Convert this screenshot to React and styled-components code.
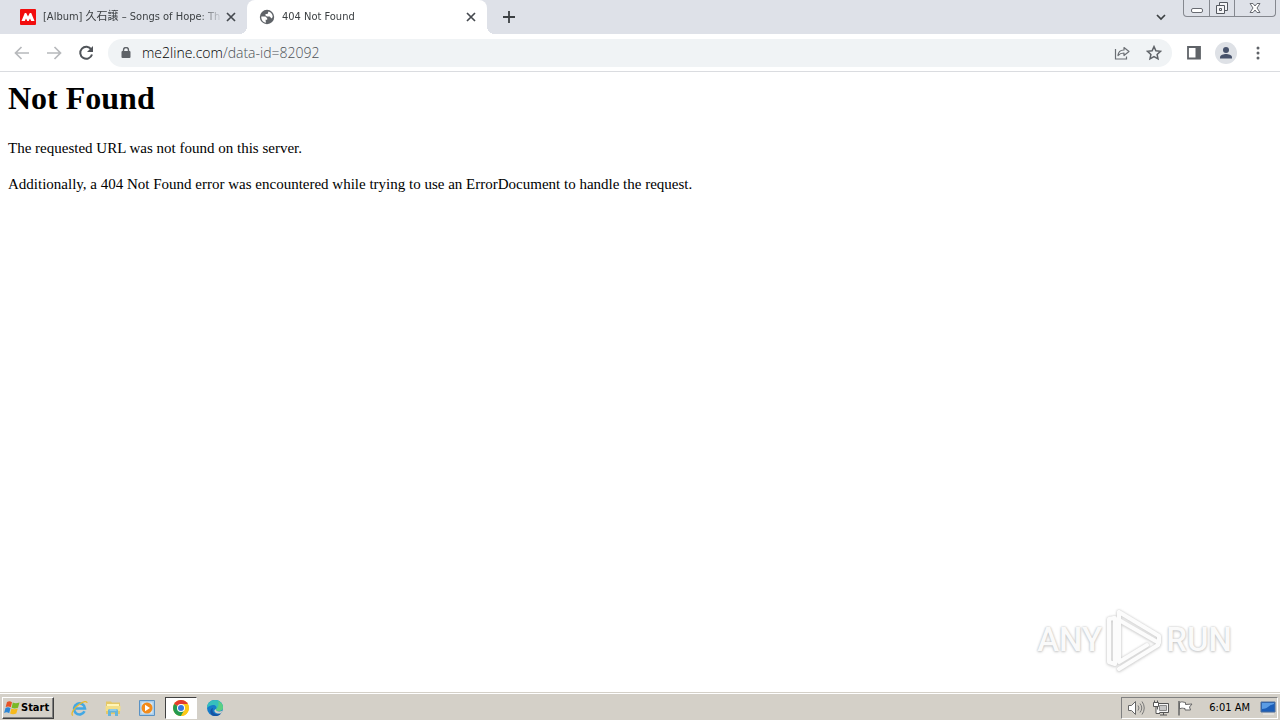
import React from "react";
import styled, { createGlobalStyle } from "styled-components";

const GlobalStyle = createGlobalStyle`
  * { box-sizing: border-box; }
  body { margin: 0; background: #fff; }
  button, input { font: inherit; color: inherit; }
  svg { display: block; flex: none; }
`;

const ui = `"DejaVu Sans Condensed", "Noto Sans", "Noto Sans CJK TC", sans-serif`;

const Screen = styled.div`
  min-height: 100vh;
  display: flex;
  flex-direction: column;
`;

const TabStrip = styled.header`
  display: flex;
  height: 34px;
  background: #dee1e8;
  font-family: ${ui};
  font-size: 11px;
  color: #3c4043;
`;

const Tab = styled.div`
  position: relative;
  display: flex;
  align-items: center;
  width: ${(p) => (p.$active ? 240 : 247)}px;
  padding: 0 8px 0 ${(p) => (p.$active ? 12 : 20)}px;
  border-radius: 8px 8px 0 0;
  background: ${(p) => (p.$active ? "#fff" : "transparent")};

  &::before, &::after {
    content: "";
    display: ${(p) => (p.$active ? "block" : "none")};
    position: absolute;
    bottom: 0;
    width: 8px;
    height: 8px;
  }
  &::before {
    right: 100%;
    background: radial-gradient(circle at 0 0, transparent 8px, #fff 8px);
  }
  &::after {
    left: 100%;
    background: radial-gradient(circle at 100% 0, transparent 8px, #fff 8px);
  }
`;

const TabTitle = styled.span`
  flex: 1;
  min-width: 0;
  margin-left: 7px;
  line-height: 18px;
  white-space: nowrap;
  mask-image: linear-gradient(to right, #000 calc(100% - 24px), transparent);
`;

const IconButton = styled.button`
  display: flex;
  align-items: center;
  justify-content: center;
  flex: none;
  width: ${(p) => p.$width || p.$size || 32}px;
  height: ${(p) => p.$size || 32}px;
  padding: 0;
  border: 0;
  border-radius: 50%;
  background: transparent;
`;

const StripEnd = styled.div`
  display: flex;
  margin-left: auto;
  padding-right: 4px;
`;

const WindowControls = styled.div`
  display: flex;
  height: 17px;
  margin-left: 5px;
  border: 1px solid #85888f;
  border-top: 0;
  border-radius: 0 0 4px 4px;
`;

const WindowButton = styled.button`
  display: flex;
  align-items: center;
  justify-content: center;
  width: ${(p) => p.$width}px;
  padding: 0;
  border: 0;
  background: transparent;
  & + & { border-left: 1px solid #85888f; }
`;

const Toolbar = styled.nav`
  display: flex;
  align-items: center;
  height: 38px;
  padding: 0 6px;
  border-bottom: 1px solid #dadce0;
  background: #fff;
`;

const AddressBar = styled.div`
  display: flex;
  align-items: center;
  flex: 1;
  height: 28px;
  margin: 0 6px;
  padding: 0 2px 0 12px;
  border-radius: 14px;
  background: #f0f3f5;
`;

const Address = styled.a`
  flex: 1;
  margin-left: 10px;
  font: 14px/20px "Open Sans", "Noto Sans", sans-serif;
  font-weight: 300;
  color: #4d5156;
  text-decoration: none;
`;

const Host = styled.span`
  color: #000;
`;

const Page = styled.main`
  flex: 1;
  display: flex;
  flex-direction: column;
  padding: 8px;
  font-family: "Liberation Serif", serif;
  color: #000;
`;

const Heading = styled.h1`
  margin: 0 0 22px;
  font-size: 32px;
  line-height: 36px;
`;

const Message = styled.p`
  margin: 0 0 16px;
  font-size: 15px;
  line-height: 20px;
`;

const Watermark = styled.div`
  display: flex;
  align-items: center;
  align-self: flex-end;
  margin: auto 40px 12px 0;
  color: #fafafa;
  font: 500 33px/64px Roboto, "Liberation Sans", sans-serif;
  text-shadow: 0 0 2px #bbb, 0 1px 3px #ccc;
  svg { margin: 0 4px; filter: drop-shadow(0 0 1px #ccc) drop-shadow(0 1px 1px #ddd); }
`;

const Taskbar = styled.footer`
  display: flex;
  align-items: center;
  height: 28px;
  padding: 2px 2px 0;
  border-top: 1px solid #d4d0c8;
  background: #d4d0c8;
  box-shadow: inset 0 1px #fff;
  font-family: ${ui};
  font-size: 11px;
  color: #000;
`;

const StartButton = styled.button`
  display: flex;
  align-items: center;
  gap: 1px;
  width: 52px;
  height: 22px;
  margin-right: 8px;
  padding: 0 1px;
  border: 1px solid;
  border-color: #fff #404040 #404040 #fff;
  background: #d4d0c8;
  box-shadow: inset -1px -1px #808080;
  font-weight: bold;
  white-space: nowrap;
`;

const TaskButton = styled.button`
  display: flex;
  align-items: center;
  justify-content: center;
  width: ${(p) => (p.$active ? 32 : 34)}px;
  height: 22px;
  margin: 0 ${(p) => (p.$active ? 1 : 0)}px;
  padding: 0;
  border: ${(p) => (p.$active ? "1px solid" : "0")};
  border-color: #404040 #fff #fff #404040;
  background: ${(p) => (p.$active ? "#fff" : "transparent")};
`;

const Tray = styled.div`
  display: flex;
  align-items: center;
  gap: 8px;
  height: 22px;
  margin-left: auto;
  padding: 0 1px 0 5px;
  border: 1px solid;
  border-color: #808080 #fff #fff #808080;
`;

const Clock = styled.time`
  margin: 0 2px 0 8px;
  white-space: nowrap;
`;

const Icon = ({ size = 16, view = 24, children, ...rest }) => (
  <svg width={size} height={size} viewBox={`0 0 ${view} ${view}`} fill="none" aria-hidden="true" {...rest}>
    {children}
  </svg>
);

const CloseIcon = () => (
  <Icon size={10} view={10}><path d="M1 1l8 8M9 1l-8 8" stroke="#45494f" strokeWidth="1.7" /></Icon>
);

const SiteIcon = () => (
  <Icon view={16}>
    <rect width="16" height="16" rx="1" fill="#f20d0d" />
    <path d="M1.500 12L4.800 4h1.400L8 7.500 9.800 4h1.400l3.300 8h-3.300L10 9.500 8.700 12H7.300L6 9.500 4.800 12z" fill="#fff" />
  </Icon>
);

const GlobeIcon = () => (
  <Icon view={16}>
    <circle cx="8" cy="8" r="7.200" fill="#5f6368" />
    <path d="M2.300 7.500l4.200.1 1.700 1.700v1.500H6.600l.3 2.900C4 13.300 2 10.800 2.300 7.500zM9.500 2.500c2.500.7 4.200 2.800 4.200 5.500l-1.200 1.500-1.800-1.900H8L6.500 6.400V5h2z" fill="#fff" />
  </Icon>
);

const ArrowIcon = ({ flip }) => (
  <Icon view={16}>
    <path d={flip ? "M1 8h13M8.500 2l6 6-6 6" : "M15 8H2M7.500 2l-6 6 6 6"} stroke="#b7b9bc" strokeWidth="1.700" />
  </Icon>
);

const ReloadIcon = () => (
  <Icon view={16}>
    <path d="M13.300 4.500A6 6 0 1 0 14 9.500" stroke="#505459" strokeWidth="2" />
    <path d="M15 1v6H9z" fill="#505459" />
  </Icon>
);

const LockIcon = () => (
  <Icon size={12} view={12}>
    <rect x="1.500" y="4" width="9" height="7" rx="1" fill="#5f6368" />
    <path d="M3.500 5V3a2.500 2.500 0 0 1 5 0v2" stroke="#5f6368" strokeWidth="1.400" />
  </Icon>
);

const ShareIcon = () => (
  <Icon view={16}>
    <path d="M1.500 4v10h11v-2.500" stroke="#6b6f74" strokeWidth="1.200" />
    <path d="M4 10.500c.3-4 2.500-5.500 6-5.500V2.500L15 6.500l-5 4V8C7.300 8 5.500 8.700 4 10.500z" stroke="#6b6f74" strokeWidth="1.200" strokeLinejoin="round" />
  </Icon>
);

const StarIcon = () => (
  <Icon view={16}>
    <path d="M8 1.600l1.900 4.200 4.600.5-3.400 3.100.9 4.500-4-2.300-4 2.300.9-4.500-3.400-3.100 4.600-.5z" stroke="#5f6368" strokeWidth="1.500" />
  </Icon>
);

const PanelIcon = () => (
  <Icon view={16}>
    <path d="M2 2h12v11.500H2z" stroke="#5f6368" strokeWidth="1.800" />
    <path d="M9.500 2H14v11.500H9.500z" fill="#5f6368" />
  </Icon>
);

const ProfileIcon = () => (
  <Icon size={22} view={22}>
    <circle cx="11" cy="11" r="11" fill="#dee1e6" />
    <circle cx="11" cy="8" r="3" fill="#47526b" />
    <path d="M5 16.500v-1.300C5 13 8.700 12 11 12s6 1 6 3.200v1.300z" fill="#47526b" />
  </Icon>
);

const MenuIcon = () => (
  <Icon view={16}>
    <g fill="#5f6368"><circle cx="8" cy="3" r="1.500" /><circle cx="8" cy="8" r="1.500" /><circle cx="8" cy="13" r="1.500" /></g>
  </Icon>
);

const WindowsFlag = () => (
  <Icon view={16}>
    <path d="M3 2c2-1.200 3.500-.8 5 .2L6.800 7.300C5.300 6.300 3.600 6 1.700 7z" fill="#e65327" />
    <path d="M8.800 2.600c2 1 3.700 1 6.700 0L14 7.800c-2.500 1-4.600.9-6.400-.1z" fill="#79b927" />
    <path d="M1.500 8c2-1.100 3.600-.8 5 .2l-1.300 5C3.700 12.200 2 12 .1 13z" fill="#2c86d6" />
    <path d="M7.400 8.600c2 1 3.900 1 6.400 0l-1.500 5c-2.300 1-4.400 1-6.200 0z" fill="#f6b91b" />
  </Icon>
);

const ExplorerIcon = () => (
  <Icon size={18} view={18}>
    <path d="M14.500 12.300A5.500 5.500 0 1 1 15 9.500H5.500" stroke="#43a8e4" strokeWidth="2.600" />
    <path d="M3 16.500c-3-1.200 1-7.500 6-11 4-2.900 8-4 8-1.500" stroke="#e9b92d" strokeWidth="1.300" />
  </Icon>
);

const FolderIcon = () => (
  <Icon size={18} view={18}>
    <path d="M2 2.500h5l1 1h8V15H2z" fill="#e5c867" />
    <path d="M3 5h12v5H3z" fill="#fff5b8" />
    <path d="M1.500 7h15v5h-15z" fill="#f3df88" />
    <path d="M4 17v-5.500q0-1.500 1.500-1.500h7q1.500 0 1.500 1.500V17h-3v-3.500H7V17z" fill="#65b5dc" />
    <path d="M5.500 11h7" stroke="#b9e2f3" />
  </Icon>
);

const MediaIcon = () => (
  <Icon size={18} view={18}>
    <path d="M1.500 1.500h15v15h-15z" fill="#a9cdea" stroke="#5a92c4" />
    <path d="M3.500 3.500h11v11h-11z" fill="#d9e9f4" />
    <circle cx="9" cy="9" r="5.500" fill="#f28b1b" />
    <path d="M7 5.800L12 9l-5 3.200z" fill="#fff" />
  </Icon>
);

const ChromeIcon = () => (
  <Icon size={16} view={16}>
    <circle cx="8" cy="8" r="8" fill="#fbc816" />
    <path d="M8 8L1.100 4A8 8 0 0 1 14.900 4z" fill="#e33b2e" />
    <path d="M8 8L1.100 4A8 8 0 0 0 8 16l3.500-6z" fill="#249a50" />
    <path d="M8 4h6.900A8 8 0 0 1 8 16l3.500-6z" fill="#fbc816" />
    <circle cx="8" cy="8" r="4" fill="#fff" />
    <circle cx="8" cy="8" r="3" fill="#3878df" />
  </Icon>
);

const EdgeIcon = () => (
  <Icon size={18} view={18}>
    <circle cx="9" cy="9" r="8" fill="#167bc9" />
    <path d="M1 9C1 4 4.500 1 9 1c5 0 8 3.500 8 7 0 3-2 4-4.500 4-2 0-3-.8-2.400-1.700C12 7 7 3.500 1 9z" fill="#36bfbd" />
    <path d="M12 2c4 2 5 4 5 6.500 0 2.700-2 3.500-4.500 3.500-2 0-3-.8-2.400-1.700C13 7 13 4 12 2z" fill="#5bcf83" />
    <path d="M7 9c-2 4 2 8 8 5.500C13 17 9.500 17.500 7 16.700 3.500 15 3.500 10 7 9z" fill="#1653a3" />
    <path d="M10 10c-1 2 3 3.500 6.500 1.700l-1.500 2.500c-4 .9-7-.7-6.500-3.200z" fill="#d4d0c8" />
  </Icon>
);

const SpeakerIcon = () => (
  <Icon size={18} view={18}>
    <path d="M1.500 6.500h3l4-4v13l-4-4h-3z" fill="#fff" stroke="#666" />
    <path d="M11 6.500q2 2.500 0 5M13 4.500q3.500 4.500 0 9M15 2.500q4.500 6.500 0 13" stroke="#777" />
  </Icon>
);

const NetworkIcon = () => (
  <Icon view={16}>
    <path d="M4.500 3.500h11v9h-11zM7 15h7M10.500 13v2" fill="#f5f5f5" stroke="#555" />
    <path d="M6.500 5.500h7v5h-7z" fill="#c6c6c6" stroke="#888" />
    <path d="M.5 2.500h5v4h-5zM1.500.5v2M4.500.5v2M3 7v6.500h4" fill="#fff" stroke="#555" />
  </Icon>
);

const FlagIcon = () => (
  <Icon view={16}>
    <path d="M2 1v14.500" stroke="#666" strokeWidth="1.500" />
    <path d="M2.500 2.500c3-1.500 4 0 6 0v2l6.500-.5-2.500 3 1 3H8V8.500c-2 0-3-1-5.500.5z" fill="#fff" stroke="#666" />
  </Icon>
);

const DesktopIcon = () => (
  <Icon view={16}>
    <path d="M1 2h14v10H1z" fill="#1c5eb8" stroke="#4c6f9d" />
    <path d="M2 3h12v1C9 5 8 9 2 9z" fill="#5b9ce4" />
    <path d="M3 14h11" stroke="#eee" />
  </Icon>
);

const PlayLogo = () => (
  <svg width="56" height="64" viewBox="0 0 56 64" fill="none" aria-hidden="true">
    <g stroke="#fcfcfc" strokeWidth="4" strokeLinejoin="round" strokeLinecap="round">
      <path d="M8 10l-5 1v43l6 2V10" />
      <path d="M13 4v50M13 4l40 24v7L13 12M13 61l39-24M13 54l28-17" />
    </g>
  </svg>
);

export default function App() {
  return (
    <Screen>
      <GlobalStyle />
      <TabStrip>
        <Tab>
          <SiteIcon />
          <TabTitle>[Album] 久石譲 – Songs of Hope: Th</TabTitle>
          <IconButton $size={16} aria-label="Close tab"><CloseIcon /></IconButton>
        </Tab>
        <Tab $active>
          <GlobeIcon />
          <TabTitle>404 Not Found</TabTitle>
          <IconButton $size={16} aria-label="Close tab"><CloseIcon /></IconButton>
        </Tab>
        <IconButton $size={34} $width={44} aria-label="New tab">
          <Icon size={12} view={12}><path d="M6 0v12M0 6h12" stroke="#3c4043" strokeWidth="1.800" /></Icon>
        </IconButton>
        <StripEnd>
          <IconButton $size={34} aria-label="Search tabs">
            <Icon size={10} view={10}><path d="M1 3l4 4 4-4" stroke="#3c4043" strokeWidth="1.700" /></Icon>
          </IconButton>
          <WindowControls>
            <WindowButton $width={25} aria-label="Minimize">
              <Icon size={14} view={14}><rect x="1.500" y="7.500" width="11" height="4" rx="1.500" fill="#fff" stroke="#686b72" /></Icon>
            </WindowButton>
            <WindowButton $width={25} aria-label="Restore">
              <Icon size={14} view={14}>
                <path d="M4.500 1.500h8v8h-8z" fill="#f5f5f7" stroke="#555960" />
                <path d="M1.500 4.500h8v8h-8zM4.500 7.500h2v2h-2z" fill="#f5f5f7" stroke="#555960" />
              </Icon>
            </WindowButton>
            <WindowButton $width={41} aria-label="Close">
              <Icon size={12} view={12}>
                <path d="M1 1.500h3l2 2.500 2-2.500h3L8 6l3 4.500H8L6 8l-2 2.500H1L4 6z" fill="#fff" stroke="#686b72" />
              </Icon>
            </WindowButton>
          </WindowControls>
        </StripEnd>
      </TabStrip>
      <Toolbar>
        <IconButton aria-label="Back"><ArrowIcon /></IconButton>
        <IconButton aria-label="Forward"><ArrowIcon flip /></IconButton>
        <IconButton aria-label="Reload"><ReloadIcon /></IconButton>
        <AddressBar>
          <LockIcon />
          <Address href="#"><Host>me2line.com</Host>/data-id=82092</Address>
          <IconButton aria-label="Share"><ShareIcon /></IconButton>
          <IconButton aria-label="Bookmark"><StarIcon /></IconButton>
        </AddressBar>
        <IconButton aria-label="Side panel"><PanelIcon /></IconButton>
        <IconButton aria-label="Profile"><ProfileIcon /></IconButton>
        <IconButton aria-label="Menu"><MenuIcon /></IconButton>
      </Toolbar>
      <Page>
        <Heading>Not Found</Heading>
        <Message>The requested URL was not found on this server.</Message>
        <Message>Additionally, a 404 Not Found error was encountered while trying to use an ErrorDocument to handle the request.</Message>
        <Watermark><span>ANY</span><PlayLogo /><span>RUN</span></Watermark>
      </Page>
      <Taskbar>
        <StartButton><WindowsFlag />Start</StartButton>
        <TaskButton aria-label="Internet Explorer"><ExplorerIcon /></TaskButton>
        <TaskButton aria-label="File Explorer"><FolderIcon /></TaskButton>
        <TaskButton aria-label="Media Player"><MediaIcon /></TaskButton>
        <TaskButton $active aria-label="Chrome"><ChromeIcon /></TaskButton>
        <TaskButton aria-label="Edge"><EdgeIcon /></TaskButton>
        <Tray>
          <SpeakerIcon />
          <NetworkIcon />
          <FlagIcon />
          <Clock>6:01 AM</Clock>
          <DesktopIcon />
        </Tray>
      </Taskbar>
    </Screen>
  );
}
